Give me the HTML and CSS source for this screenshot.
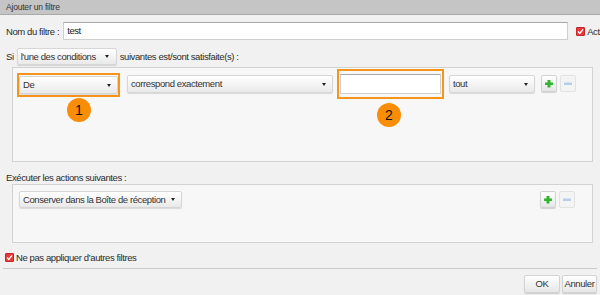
FILE: index.html
```html
<!DOCTYPE html>
<html lang="fr">
<head>
<meta charset="utf-8">
<title>Ajouter un filtre</title>
<link rel="stylesheet" href="styles.css">
</head>
<body>
<div class="dialog">
  <div class="titlebar">Ajouter un filtre</div>
  <div class="content">
    <div class="name-row">
      <span class="label">Nom du filtre :</span>
      <div class="textinput name-input">test</div>
      <span class="check"><svg viewBox="0 0 9 9" width="9" height="9"><path d="M2 4.6 L3.8 6.4 L7 2.4" fill="none" stroke="#fff" stroke-width="1.4"/></svg></span>
      <span class="check-label">Actif</span>
    </div>
    <div class="si-row">
      <span class="label">Si</span>
      <div class="select sel-cond">l'une des conditions<span class="caret"></span></div>
      <span class="label">suivantes est/sont satisfaite(s) :</span>
    </div>
    <div class="box cond-box">
      <div class="row cond-row">
        <div class="hl hl1"><div class="select sel-de">De<span class="caret"></span></div></div>
        <div class="select sel-match">correspond exactement<span class="caret"></span></div>
        <div class="hl hl2"><div class="textinput val-input"></div></div>
        <div class="select sel-tout">tout<span class="caret"></span></div>
        <div class="btn icon-btn plus"><svg viewBox="0 0 16 17" width="16" height="17"><path d="M6.5 5h3v2.5H12v2.5H9.5v2.5h-3V10H4V7.5h2.5z" fill="#2fb52f"/></svg></div>
        <div class="btn icon-btn minus disabled"><svg viewBox="0 0 16 17" width="16" height="17"><rect x="4" y="7.5" width="8" height="2.5" fill="#b8cde6"/></svg></div>
      </div>
    </div>
    <div class="section-label">Exécuter les actions suivantes :</div>
    <div class="box action-box">
      <div class="row action-row">
        <div class="select sel-action">Conserver dans la Boîte de réception<span class="caret"></span></div>
        <div class="spacer"></div>
        <div class="btn icon-btn plus"><svg viewBox="0 0 16 17" width="16" height="17"><path d="M6.5 5h3v2.5H12v2.5H9.5v2.5h-3V10H4V7.5h2.5z" fill="#2fb52f"/></svg></div>
        <div class="btn icon-btn minus disabled"><svg viewBox="0 0 16 17" width="16" height="17"><rect x="4" y="7.5" width="8" height="2.5" fill="#b8cde6"/></svg></div>
      </div>
    </div>
    <div class="stop-row">
      <span class="check"><svg viewBox="0 0 9 9" width="9" height="9"><path d="M2 4.6 L3.8 6.4 L7 2.4" fill="none" stroke="#fff" stroke-width="1.4"/></svg></span>
      <span class="label">Ne pas appliquer d’autres filtres</span>
    </div>
  </div>
  <div class="footer">
    <div class="btn text-btn ok">OK</div>
    <div class="btn text-btn cancel">Annuler</div>
  </div>
  <div class="badge badge1">1</div>
  <div class="badge badge2">2</div>
</div>
</body>
</html>
```

FILE: styles.css
```css
html, body {
  margin: 0;
  padding: 0;
  width: 600px;
  height: 295px;
  overflow: hidden;
  background: #f1f1f1;
}
body {
  font-family: "Liberation Sans", Arial, sans-serif;
  font-size: 9.5px;
  letter-spacing: -0.4px;
  color: #2b2b2b;
}
.dialog {
  position: relative;
  width: 600px;
  height: 295px;
  overflow: hidden;
}
.titlebar {
  height: 14px;
  line-height: 14px;
  background: #c5c5c5;
  border-bottom: 1px solid #a9a9a9;
  padding-left: 6px;
  font-size: 8.5px;
  letter-spacing: -0.2px;
  color: #333;
}
.content {
  padding: 0 0 0 6px;
}
.label { white-space: nowrap; }
.name-row {
  display: flex;
  align-items: center;
  margin-top: 7px;
  height: 18px;
  white-space: nowrap;
}
.textinput {
  box-sizing: border-box;
  background: #fff;
  border: 1px solid #cfcfcf;
  border-top-color: #a8a8a8;
  height: 18px;
  line-height: 16px;
  padding-left: 3px;
  color: #222;
  flex: none;
}
.name-input {
  width: 505px;
  margin-left: 4px;
}
.check {
  display: inline-flex;
  box-sizing: border-box;
  width: 9px;
  height: 9px;
  background: #e8383a;
  border: 1px solid #c62426;
  border-radius: 1px;
  align-items: center;
  justify-content: center;
  flex: none;
}
.check svg { display: block; margin: -1px; }
.name-row .check { margin-left: 8px; }
.check-label { margin-left: 2px; }
.si-row {
  display: flex;
  align-items: center;
  margin-top: 8px;
  height: 17px;
}
.select {
  position: relative;
  box-sizing: border-box;
  height: 18px;
  line-height: 16px;
  padding-left: 3px;
  border: 1px solid #d6d6d6;
  border-radius: 2px;
  background: linear-gradient(#ffffff, #e9e9e9);
  box-shadow: 0 1px 1px rgba(0, 0, 0, 0.12);
  color: #333;
  white-space: nowrap;
  flex: none;
}
.caret {
  position: absolute;
  right: 6px;
  top: 7px;
  width: 0;
  height: 0;
  border-left: 2.5px solid transparent;
  border-right: 2.5px solid transparent;
  border-top: 3px solid #222;
}
.sel-cond {
  width: 100px;
  height: 17px;
  line-height: 15px;
  margin: 0 3px 0 3px;
}
.sel-cond .caret { top: 6px; right: 7px; }
.box {
  box-sizing: border-box;
  width: 581px;
  margin-left: 6px;
  background: #f7f7f7;
  border: 1px solid #d2d2d2;
}
.cond-box {
  margin-top: 2px;
  height: 95px;
}
.row {
  display: flex;
  align-items: center;
}
.cond-row {
  padding-left: 4px;
  height: 31px;
}
.hl {
  box-sizing: border-box;
  border: 2px solid #f7941d;
  flex: none;
}
.hl1 {
  width: 103px;
  height: 24px;
  padding: 1px 0;
  margin-top: 2px;
}
.sel-de { width: 99px; height: 18px; }
.sel-match {
  width: 206px;
  margin-left: 7px;
}
.hl2 {
  width: 107px;
  height: 30px;
  margin-left: 4px;
  padding: 3px 1px;
}
.val-input { width: 101px; height: 20px; }
.sel-tout {
  width: 86px;
  margin-left: 5px;
}
.btn {
  box-sizing: border-box;
  border: 1px solid #d3d3d3;
  border-radius: 2px;
  background: linear-gradient(#ffffff, #e6e6e6);
  box-shadow: 0 1px 1px rgba(0, 0, 0, 0.15);
  flex: none;
}
.icon-btn {
  width: 16px;
  height: 17px;
  position: relative;
}
.icon-btn svg {
  position: absolute;
  left: -1px;
  top: -1px;
}
.plus { margin-left: 6px; }
.minus { margin-left: 3px; }
.disabled {
  background: #f4f4f4;
  border-color: #e2e2e2;
  box-shadow: none;
}
.section-label {
  margin-top: 9px;
  height: 13px;
  line-height: 13px;
}
.action-box {
  height: 59px;
}
.action-row {
  padding: 6px 0 0 6px;
}
.sel-action {
  width: 163px;
  height: 17px;
  line-height: 15px;
}
.sel-action .caret { top: 6px; }
.spacer { width: 352px; flex: none; }
.stop-row {
  display: flex;
  align-items: center;
  margin-top: 8px;
  margin-left: -1px;
  height: 12px;
}
.stop-row .check { margin-right: 2px; }
.footer {
  margin: 5px 3px 0 3px;
  border-top: 1px solid #c9c9c9;
  padding-top: 6px;
  display: flex;
  justify-content: flex-end;
}
.text-btn {
  height: 18px;
  line-height: 16px;
  text-align: center;
  color: #333;
}
.ok { width: 36px; }
.cancel { width: 35px; margin-left: 2px; }
.badge {
  position: absolute;
  width: 24px;
  height: 24px;
  border-radius: 50%;
  background: #f98e06;
  color: #111;
  font-size: 14px;
  letter-spacing: 0;
  line-height: 24px;
  text-align: center;
}
.badge1 { left: 67px; top: 98px; }
.badge2 { left: 377px; top: 103px; }
```
